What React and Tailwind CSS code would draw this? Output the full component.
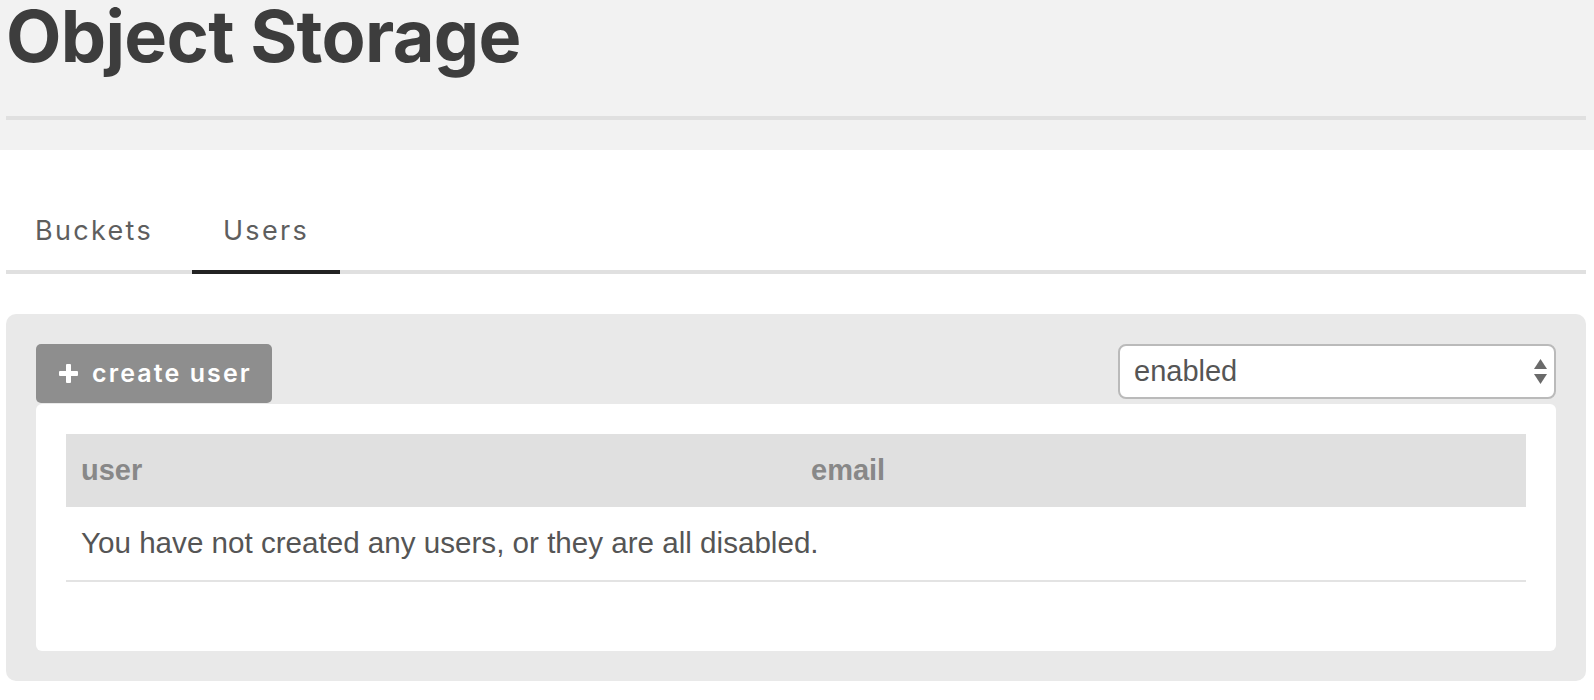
import React from "react";

function Plus() {
  return (
    <svg width="19" height="19" viewBox="0 0 19 19" className="shrink-0">
      <rect x="7" y="0" width="5" height="19" rx="1" fill="#ffffff" />
      <rect x="0" y="7" width="19" height="5" rx="1" fill="#ffffff" />
    </svg>
  );
}

function Arrows() {
  return (
    <svg width="13" height="25" viewBox="0 0 13 25" className="shrink-0">
      <polygon points="6.5,0 13,10 0,10" fill="#6a6a6a" />
      <polygon points="0,15 13,15 6.5,25" fill="#6a6a6a" />
    </svg>
  );
}

export default function App() {
  return (
    <div className="w-[1594px] h-[700px] bg-white overflow-hidden">
      <div className="h-[150px] bg-[#f2f2f2] pl-[6px] pr-[8px]">
        <h1 className="font-['Inter',sans-serif] font-bold text-[72px] leading-[72px] pb-[8px] text-[#3d3d3d] tracking-[-0.7px]">
          Object Storage
        </h1>
        <div className="mt-[36px] h-[4px] bg-[#e0e0e0]" />
      </div>

      <div className="pl-[6px] pr-[8px]">
        <div className="mt-[54px] flex gap-[8px] border-b-[4px] border-[#e0e0e0] font-['Inter',sans-serif] text-[27px] leading-[27px] tracking-[2.3px] text-[#5e5e5e]">
          <div className="pl-[29px] pr-[31px] pt-[13px] pb-[26px]">Buckets</div>
          <div className="px-[31px] pt-[13px] pb-[26px] -mb-[4px] border-b-[4px] border-[#222222]">Users</div>
        </div>

        <div className="mt-[40px] bg-[#e9e9e9] rounded-[10px] p-[30px]">
          <div className="flex justify-between items-start">
            <button className="h-[59px] w-[236px] bg-[#8e8e8e] rounded-[5px] flex items-center pl-[23px] gap-[14px] font-['Inter',sans-serif] font-semibold text-[25px] tracking-[2.1px] text-white">
              <Plus />
              <span>create user</span>
            </button>
            <div className="h-[55px] w-[438px] bg-white border-[2px] border-[#bababa] rounded-[8px] flex items-center justify-between pl-[14px] pr-[7px] font-['Liberation_Sans',Arial,sans-serif] text-[29px] text-[#555555]">
              <span>enabled</span>
              <Arrows />
            </div>
          </div>

          <div className="mt-[1px] bg-white rounded-[6px] px-[30px] pt-[30px] pb-[69px] font-['Liberation_Sans',Arial,sans-serif]">
            <div className="grid grid-cols-2 h-[73px] items-center bg-[#e0e0e0] text-[#888888] font-bold text-[29px]">
              <div className="px-[15px]">user</div>
              <div className="px-[15px]">email</div>
            </div>
            <div className="h-[75px] flex items-center px-[15px] border-b-[2px] border-[#e3e3e3] text-[#555555] text-[29.6px]">
              You have not created any users, or they are all disabled.
            </div>
          </div>
        </div>
      </div>
    </div>
  );
}
